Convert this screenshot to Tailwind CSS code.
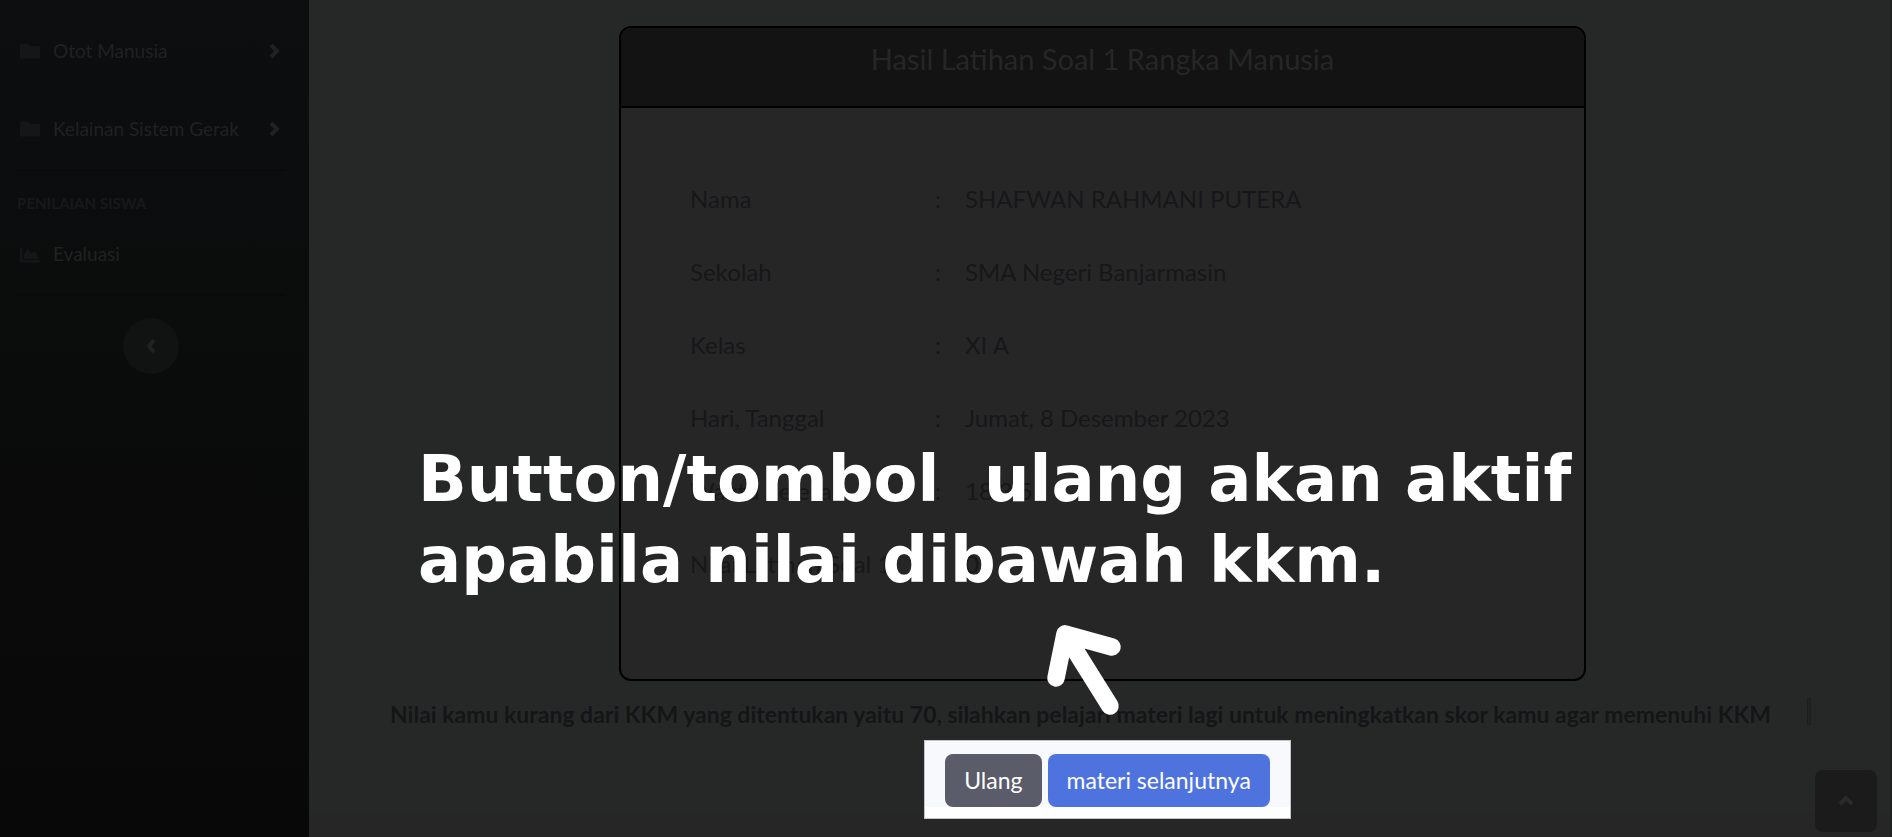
<!DOCTYPE html>
<html lang="id">
<head>
<meta charset="utf-8">
<meta name="viewport" content="width=device-width, initial-scale=1">
<title>Hasil Latihan Soal 1</title>
<script src="https://cdn.jsdelivr.net/npm/@tailwindcss/browser@4"></script>
</head>
<body class="flex min-h-screen bg-[#262827] font-['Lato',sans-serif]">

<!-- Sidebar -->
<nav class="flex w-[309px] shrink-0 flex-col bg-linear-to-b from-[#0d0e0f] to-[#080808] pt-3 text-[19px] text-[#202122]">
  <a href="#otot" class="flex h-[78px] items-center pl-5 pr-[28px]">
    <svg class="size-5 text-[#151617]" viewBox="0 0 512 512" fill="currentColor"><path d="M490 128H272l-64-64H22C10 64 0 74 0 86v340c0 12 10 22 22 22h468c12 0 22-10 22-22V150c0-12-10-22-22-22z"/></svg>
    <span class="ml-[13px] flex-1 whitespace-nowrap">Otot Manusia</span>
    <svg class="h-4 w-3" viewBox="0 0 12 16" fill="none" stroke="currentColor" stroke-width="4"><path d="M2 2l6 6-6 6"/></svg>
  </a>
  <a href="#kelainan" class="flex h-[78px] items-center pl-5 pr-[28px]">
    <svg class="size-5 text-[#151617]" viewBox="0 0 512 512" fill="currentColor"><path d="M490 128H272l-64-64H22C10 64 0 74 0 86v340c0 12 10 22 22 22h468c12 0 22-10 22-22V150c0-12-10-22-22-22z"/></svg>
    <span class="ml-[13px] flex-1 whitespace-nowrap">Kelainan Sistem Gerak</span>
    <svg class="h-4 w-3" viewBox="0 0 12 16" fill="none" stroke="currentColor" stroke-width="4"><path d="M2 2l6 6-6 6"/></svg>
  </a>
  <hr class="ml-[17px] mr-[23px] mt-px border-t-2 border-[#090a0b]">
  <h2 class="mt-5 pl-[17px] text-[15px] leading-6 font-black text-[#17181a]">PENILAIAN SISWA</h2>
  <a href="#evaluasi" class="flex h-[79px] items-center pl-5">
    <svg class="size-5 text-[#151617]" viewBox="0 0 512 512" fill="currentColor"><path d="M500 384c6.600 0 12 5.400 12 12v40c0 6.600-5.400 12-12 12H12c-6.600 0-12-5.400-12-12V76c0-6.600 5.400-12 12-12h40c6.600 0 12 5.400 12 12v308h436zM372.700 159.500L288 216l-85.300-113.700c-5.100-6.800-15.500-6.300-19.900 1L96 248v104h384l-89.900-187.800c-3.200-6.500-11.400-8.700-17.400-4.700z"/></svg>
    <span class="ml-[13px]">Evaluasi</span>
  </a>
  <hr class="ml-[17px] mr-[23px] border-t-2 border-[#08090a]">
  <button type="button" aria-label="Ciutkan menu" class="ml-[123px] mt-[22px] flex size-14 items-center justify-center rounded-full bg-[#111212] text-[#202121]">
    <svg class="h-4 w-3" viewBox="0 0 12 16" fill="none" stroke="currentColor" stroke-width="4"><path d="M9 2L4 8l5 6"/></svg>
  </button>
</nav>

<!-- Content -->
<main class="relative flex min-w-0 flex-1 flex-col items-center border-r-2 border-[#1e1f1f] pl-1.5">
  <section class="mt-[26px] w-full max-w-[967px] overflow-hidden rounded-xl border-2 border-black bg-[#262626]">
    <h1 class="h-20 border-b-2 border-black bg-[#131313] pt-[11px] text-center text-[29px] leading-10 text-[#262626]">Hasil Latihan Soal 1 Rangka Manusia</h1>
    <table class="mb-[79px] ml-[69px] mt-[54px] text-left text-2xl text-[#17171a]">
      <tbody>
        <tr class="h-[73px]"><th scope="row" class="w-[245px] font-normal">Nama</th><td class="w-[30px]">:</td><td>SHAFWAN RAHMANI PUTERA</td></tr>
        <tr class="h-[73px]"><th scope="row" class="font-normal">Sekolah</th><td>:</td><td>SMA Negeri Banjarmasin</td></tr>
        <tr class="h-[73px]"><th scope="row" class="font-normal">Kelas</th><td>:</td><td>XI A</td></tr>
        <tr class="h-[73px]"><th scope="row" class="font-normal">Hari, Tanggal</th><td>:</td><td>Jumat, 8 Desember 2023</td></tr>
        <tr class="h-[73px]"><th scope="row" class="font-normal">Waktu Selesai</th><td>:</td><td>18:3:5</td></tr>
        <tr class="h-[73px]"><th scope="row" class="font-normal">Nilai Latihan Soal 1</th><td>:</td><td>0</td></tr>
      </tbody>
    </table>
  </section>

  <div class="mr-5 mt-[15px] flex w-full max-w-[1436px] items-start">
    <p class="flex-1 pr-5 text-center text-[23px] leading-9 font-bold text-[#151518]">Nilai kamu kurang dari KKM yang ditentukan yaitu 70, silahkan pelajari materi lagi untuk meningkatkan skor kamu agar memenuhi KKM</p>
    <span class="mt-0.5 h-[27px] w-1 border border-[#1d1e1e] bg-[#222323]"></span>
  </div>

  <div class="relative z-10 -mb-1.5 ml-2.5 mt-2 border border-[#c4c5c7] bg-white pb-[11px]">
    <div class="flex gap-1.5 bg-[#f8f9fd] px-5 pt-[13px] text-[23px] text-white">
      <button type="button" class="h-[53px] rounded-lg bg-[#5a5c69] px-[19px]">Ulang</button>
      <button type="button" class="h-[53px] rounded-lg bg-[#4e73df] px-[19px]">materi selanjutnya</button>
    </div>
  </div>

  <footer class="-ml-1.5 mt-auto h-6 self-stretch bg-[#272626]"></footer>

  <!-- Annotation over the page -->
  <p class="pointer-events-none absolute left-[109px] top-[439px] z-20 font-['DejaVu_Sans',sans-serif] text-[64px] leading-[81px] font-bold whitespace-nowrap text-white">Button/tombol&nbsp; ulang akan aktif<br>apabila nilai dibawah kkm.</p>
  <svg class="pointer-events-none absolute left-[729px] top-[620px] z-20 h-[100px] w-[90px]" viewBox="0 0 90 100" fill="none" stroke="#fff" stroke-width="17.500" stroke-linecap="round" stroke-linejoin="round"><path d="M18 58L27 14L74 27M27 14L72 86"/></svg>

  <a href="#top" aria-label="Kembali ke atas" class="absolute bottom-[5px] right-[13px] flex size-[62px] items-center justify-center rounded-lg bg-[#1b1b1b] text-[#2b2b2b]">
    <svg class="h-3 w-4" viewBox="0 0 16 12" fill="none" stroke="currentColor" stroke-width="4"><path d="M2 9l6-6 6 6"/></svg>
  </a>
</main>
</body>
</html>
